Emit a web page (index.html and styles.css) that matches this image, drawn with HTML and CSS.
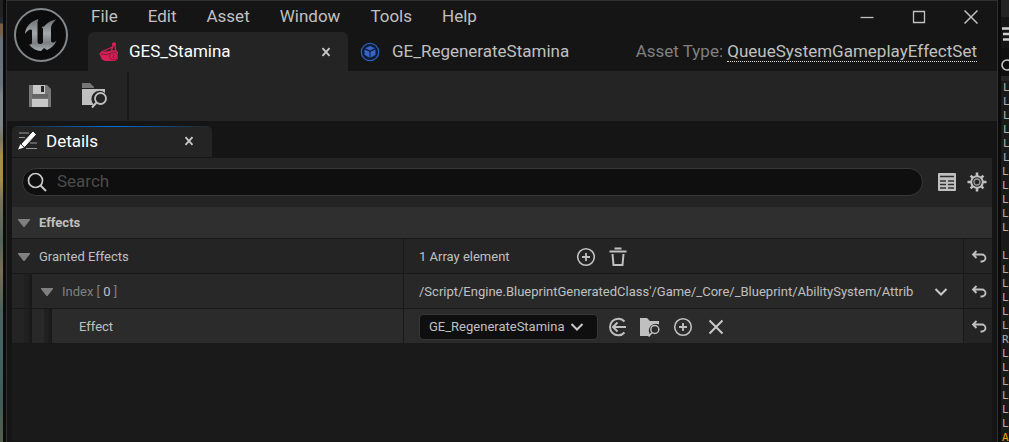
FILE: index.html
```html
<!DOCTYPE html>
<html lang="en">
<head>
<meta charset="utf-8">
<title>GES_Stamina</title>
<link rel="stylesheet" href="styles.css">
</head>
<body>
<svg class="defs" aria-hidden="true">
  <defs>
    <linearGradient id="metal" x1="0" y1="0" x2="0" y2="1">
      <stop offset="0" stop-color="#6d7072"/><stop offset=".45" stop-color="#a5a8aa"/><stop offset=".75" stop-color="#7b7e80"/><stop offset="1" stop-color="#a9b0b2"/>
    </linearGradient>
    <symbol id="reset" viewBox="0 0 16 16"><path d="M5.500 2 2 5.500 5.500 9M2.500 5.500H11a3.500 3.500 0 0 1 0 7H9.500" fill="none" stroke="#c0c0c0" stroke-width="1.800"/></symbol>
    <symbol id="chevron" viewBox="0 0 14 14"><path d="M1.500 4 7 9.500 12.500 4" fill="none" stroke="#c8c8c8" stroke-width="2"/></symbol>
    <symbol id="plus" viewBox="0 0 20 20"><circle cx="10" cy="10" r="8.300" fill="none" stroke="#c0c0c0" stroke-width="1.600"/><path d="M10 6v8M6 10h8" stroke="#c0c0c0" stroke-width="1.800"/></symbol>
    <symbol id="cross" viewBox="0 0 10 10"><path d="M1.500 1.200 8.500 8.800M8.500 1.200 1.500 8.800" stroke="#c8c8c8" stroke-width="1.900"/></symbol>
    <symbol id="triangle" viewBox="0 0 12 8"><path d="M0 0H12V1L6.500 8H5.500L0 1Z" fill="#808080"/></symbol>
  </defs>
</svg>
<div class="desktop">
  <div class="scene"></div>
  <main class="window">
    <header class="titlebar">
      <svg class="logo" viewBox="0 0 56 56" role="img" aria-label="Unreal Engine">
        <circle cx="28" cy="28" r="26" fill="#0c0c0c" stroke="#85888a" stroke-width="2"/>
        <path d="M25.500 12C18 14 12.500 19.500 12 27c2-3 4-4.500 5.500-4.500 1 0 1.500.5 1.500 1.500v11.500c0 1.500-1 2-3 2 3 4 7.500 6.300 12 6.500l3-3 3 2c4-1.500 7.500-4.500 9.500-9.500-1.500 1.500-2.500 2-3.500 2s-2-.6-2-2V21c0-3 2-5.500 5-8.500-5 1-9 3.500-12 7l-2.500.5c1 .6 1.500 1.500 1.500 2.500v13c-.8 1-2 1.500-3 1.500-1.500 0-2.500-.8-2.500-2.500V17c0-2 .5-3.500 1-5Z" fill="url(#metal)"/>
      </svg>
      <div class="title-rows">
        <div class="menu-row">
          <nav class="menus">
            <button>File</button><button>Edit</button><button>Asset</button><button>Window</button><button>Tools</button><button>Help</button>
          </nav>
          <div class="controls">
            <button aria-label="Minimize"><svg width="14" height="14"><path d="M.500 7.500h13" stroke="#c0c0c0" stroke-width="1.300"/></svg></button>
            <button aria-label="Maximize"><svg width="14" height="14"><path d="M1.500 1.500h11v11h-11z" fill="none" stroke="#c0c0c0" stroke-width="1.300"/></svg></button>
            <button aria-label="Close window"><svg width="14" height="14"><path d="M.500.500l13 13M13.500.500l-13 13" stroke="#c0c0c0" stroke-width="1.500"/></svg></button>
          </div>
        </div>
        <div class="tab-row">
          <div class="tab active">
            <svg width="20" height="20" viewBox="0 0 20 20"><path d="M1 10.500C4 10 8 9 11 9c2-1 6-1 8 1v7l-3 2H8c-4 0-6-2-6.500-5L.500 12Z" fill="#d91f58"/><path d="M2 10 13.500 5M14.500 2.500 12 9.500M15.500 2.500l1.500 7" stroke="#d91f58" stroke-width="1.300"/><circle cx="15" cy="2.300" r="2" fill="#d91f58"/><path d="M2 12q5 1.500 9-.5" stroke="#7c1939" fill="none"/><circle cx="14.500" cy="14" r="4" fill="none" stroke="#8b1a3e"/><path d="m13.500 12 2 1.500-2 1.500 2 1" stroke="#8b1a3e" fill="none"/></svg>
            <span class="tab-name">GES_Stamina</span>
            <button aria-label="Close GES_Stamina"><svg width="10" height="10"><use href="#cross"/></svg></button>
          </div>
          <div class="tab">
            <svg width="20" height="20" viewBox="0 0 20 20"><circle cx="10" cy="10" r="8.700" fill="#101b30" stroke="#2c5dbd" stroke-width="1.300"/><path d="m10 4 5 2.300-5 2.300-5-2.300ZM4.500 7.500l5 2.300v6l-5-3ZM15.500 7.500l-5 2.300v6l5-3Z" fill="#3566c8"/></svg>
            <span class="tab-name">GE_RegenerateStamina</span>
          </div>
          <div class="asset-type"><span>Asset Type:</span> <a href="#">QueueSystemGameplayEffectSet</a></div>
        </div>
      </div>
    </header>
    <div class="toolbar">
      <button aria-label="Save"><svg width="24" height="24" viewBox="0 0 24 24"><path d="M1 1h18l4 4v18H1Z" fill="#777"/><path d="M5 1h12v9H5ZM4 15h16v8H4Z" fill="#c8c8c8"/><path d="M4 10h16v4H4Z" fill="#666"/><path d="M13 2h3v6h-3Z" fill="#242424"/></svg></button>
      <button aria-label="Browse"><svg width="26" height="26" viewBox="0 0 26 26"><path d="M1 5V0h8l4 4v1Z" fill="#777"/><path d="M1 6h23v4a8 8 0 0 0-11 12H1Z" fill="#c0c0c0"/><circle cx="19.500" cy="15.500" r="5.500" fill="#242424" stroke="#c0c0c0" stroke-width="1.800"/><path d="m15.500 19.500-4.500 5" stroke="#c0c0c0" stroke-width="2"/></svg></button>
      <span class="divider"></span>
    </div>
    <section class="dock">
      <div class="panel-tab">
        <svg width="20" height="20" viewBox="0 0 20 20"><path d="M1 2h10M1 6.500h6M12 12h7M8 17.500h11" stroke="#999" stroke-width="1.200"/><path d="m15 1 2.500 2.500L6.500 15.500 4 13Z" stroke="#fff" fill="#fff"/><path d="m2.500 13 3.500 3.500L0 18.500Z" fill="#fff"/></svg>
        <span class="panel-name">Details</span>
        <button aria-label="Close Details"><svg width="10" height="10"><use href="#cross"/></svg></button>
      </div>
      <div class="panel">
        <div class="search-row">
          <label class="search">
            <svg width="20" height="20" viewBox="0 0 20 20"><circle cx="8.500" cy="8.500" r="7" fill="none" stroke="#c8c8c8" stroke-width="1.700"/><path d="m13.500 13.500 5.500 5.500" stroke="#c8c8c8" stroke-width="2"/></svg>
            <input type="text" placeholder="Search" aria-label="Search">
          </label>
          <button aria-label="Property matrix"><svg width="18" height="18" viewBox="0 0 18 18"><rect width="18" height="18" rx="1" fill="#c0c0c0"/><path d="M2 3.500h14M2 8h6M10 8h6M2 11.500h6M10 11.500h6M2 15h6M10 15h6" stroke="#303030" stroke-width="1.600"/></svg></button>
          <button aria-label="Settings"><svg width="20" height="20" viewBox="0 0 20 20"><path d="M10 .500v19M.500 10h19M3.600 3.600l12.800 12.800M16.400 3.600 3.600 16.400" stroke="#c0c0c0" stroke-width="2.600"/><circle cx="10" cy="10" r="5.800" fill="#242424" stroke="#c0c0c0" stroke-width="2"/><circle cx="10" cy="10" r="3" fill="none" stroke="#999" stroke-width="1.300"/></svg></button>
        </div>
        <div class="category"><svg width="12" height="8"><use href="#triangle"/></svg><h2>Effects</h2></div>
        <div class="row">
          <div class="name"><svg width="12" height="8"><use href="#triangle"/></svg><span>Granted Effects</span></div>
          <div class="value">
            <span class="count">1 Array element</span>
            <button aria-label="Add element"><svg width="20" height="20"><use href="#plus"/></svg></button>
            <button aria-label="Delete all elements"><svg width="20" height="20" viewBox="0 0 20 20"><path d="M1.500 4.500h17M6.500 1.500h7" stroke="#c0c0c0" stroke-width="2"/><path d="m4.500 7 1 11h9l1-11" fill="none" stroke="#c0c0c0" stroke-width="2"/></svg></button>
          </div>
          <div class="reset"><button aria-label="Reset Granted Effects"><svg width="16" height="16"><use href="#reset"/></svg></button></div>
        </div>
        <div class="row level1">
          <i class="indent"></i>
          <div class="name"><svg width="12" height="8"><use href="#triangle"/></svg><span class="dim">Index [ <b>0</b> ]</span></div>
          <div class="value">
            <span class="path">/Script/Engine.BlueprintGeneratedClass'/Game/_Core/_Blueprint/AbilitySystem/Attrib</span>
            <button class="expand" aria-label="Choose class"><svg width="14" height="14"><use href="#chevron"/></svg></button>
          </div>
          <div class="reset"><button aria-label="Reset Index 0"><svg width="16" height="16"><use href="#reset"/></svg></button></div>
        </div>
        <div class="row level2">
          <i class="indent"></i><i class="indent second"></i>
          <div class="name"><label for="effect">Effect</label></div>
          <div class="value">
            <span class="picker"><select id="effect"><option>GE_RegenerateStamina</option></select><svg width="14" height="14"><use href="#chevron"/></svg></span>
            <div class="actions">
            <button aria-label="Use selected"><svg width="20" height="20" viewBox="0 0 20 20"><path d="M17.500 4.500A8.300 8.300 0 1 0 17.500 15.500" fill="none" stroke="#c0c0c0" stroke-width="1.900"/><path d="M19 10H6M10.500 5.500 6 10l4.500 4.500" fill="none" stroke="#c0c0c0" stroke-width="2"/></svg></button>
            <button aria-label="Browse to asset"><svg width="20" height="20" viewBox="0 0 20 20"><path d="M0 1h7l3 3h9v3.500a7 7 0 0 0-9 10V19H0Z" fill="#c0c0c0"/><circle cx="14.800" cy="12.500" r="4" fill="none" stroke="#c0c0c0" stroke-width="1.500"/><path d="m12 15.500-3.500 4" stroke="#c0c0c0" stroke-width="1.700"/></svg></button>
            <button aria-label="Create new"><svg width="20" height="20"><use href="#plus"/></svg></button>
            <button aria-label="Clear"><svg width="20" height="20" viewBox="0 0 20 20"><path d="m3.500 3.500 13 13m0-13-13 13" stroke="#c8c8c8" stroke-width="2"/></svg></button>
            </div>
          </div>
          <div class="reset"><button aria-label="Reset Effect"><svg width="16" height="16"><use href="#reset"/></svg></button></div>
        </div>
      </div>
    </section>
  </main>
  <aside class="log">
    <div class="log-top"><svg width="14" height="14"><path d="M0 1.500h14M1 7h13M1 12.500h13" stroke="#d0d0d0" stroke-width="2.500"/></svg></div>
    <div class="log-search"><svg width="12" height="12" viewBox="0 0 12 12"><circle cx="6" cy="6" r="5" fill="none" stroke="#c8c8c8" stroke-width="1.600"/></svg></div>
    <pre class="lines"><span class="inset">L
L
L
L
L
L
</span>L
L
L
L
L

L
L
L
L
L
L
R
L
L
L
L
L
L
<span class="warn">A</span></pre>
  </aside>
</div>
</body>
</html>
```
FILE: styles.css
```css
* { box-sizing: border-box; }
body { margin: 0; background: #0b0b0b; color: #c0c0c0; font: 13px/16px Roboto, "Noto Sans", sans-serif; }
button { display: flex; align-items: center; justify-content: center; padding: 0; border: 0; background: none; color: inherit; font: inherit; }
svg { display: block; flex: none; }
.defs { position: absolute; width: 0; height: 0; }
.desktop { display: grid; grid-template-columns: 3px minmax(0, 1fr) 8px; column-gap: 3px; height: 100vh; overflow: hidden; }
.scene { background: linear-gradient(#222 0 17px, #252a2e 17px 23px, #765f42 24px 32px, #68717c 40px 85px, #7d8587 95px 125px, #79775f 140px, #a78c4d 155px 180px, #777358 200px, #52635e 240px, #796d55 270px, #4d625d 310px, #456365 350px, #405b56 400px, #555e4c); }
.window { display: flex; flex-direction: column; min-width: 0; border: solid #303030; border-width: 1px 1px 0; background: #151515; }

.titlebar { display: flex; height: 70px; }
.logo { width: 56px; height: 56px; margin: 6px 19px 0 6px; }
.title-rows { flex: 1; min-width: 0; display: flex; flex-direction: column; }
.menu-row { display: flex; justify-content: space-between; height: 31px; font-size: 17px; line-height: 20px; }
.menus { display: flex; gap: 30px; padding: 0 0 2px 3px; }
.controls { display: flex; gap: 38px; padding-right: 19px; }
.tab-row { flex: 1; display: flex; font-size: 17px; line-height: 20px; }
.tab { display: flex; align-items: center; gap: 12px; padding: 0 13px 0 12px; }
.tab.active { width: 260px; padding: 0 17px 0 11px; gap: 10px; border-radius: 6px 6px 0 0; background: #242424; color: #fff; }
.tab-name, .panel-name { flex: 1; padding-bottom: 2px; }
.asset-type { align-self: center; margin-left: auto; padding: 0 20px 2px 0; color: #808080; white-space: nowrap; }
.asset-type a { color: #c0c0c0; text-decoration: none; border-bottom: 1px dotted #e0e0e0; }

.toolbar { display: flex; align-items: center; height: 50px; padding-left: 21px; gap: 29px; background: #242424; }
.divider { width: 2px; height: 48px; margin-left: -9px; background: #191919; }

.dock { flex: 1; display: flex; flex-direction: column; padding: 5px 5px 1px; }
.panel-tab { position: relative; display: flex; align-items: center; gap: 8px; width: 200px; height: 31px; margin-bottom: 1px; padding: 0 18px 2px 6px; border-radius: 5px 5px 0 0; background: #242424; color: #fff; font-size: 17px; line-height: 20px; overflow: hidden; }
.panel-name { padding-bottom: 0; }
.panel-tab::before { content: ""; position: absolute; inset: 0 0 auto; height: 1px; background: linear-gradient(90deg, transparent, #0070e0 50%, transparent); }
.panel { flex: 1; background: #1a1a1a; }
.search-row { display: flex; align-items: center; gap: 11px; height: 49px; padding: 0 5px 1px 10px; background: #242424; }
.search { flex: 1; display: flex; align-items: center; gap: 10px; height: 28px; margin-right: 4px; padding: 0 4px; border: 1px solid #383838; border-radius: 14px; background: #0f0f0f; }
.search input { flex: 1; min-width: 0; padding: 0 0 2px; border: 0; outline: 0; background: none; color: #c0c0c0; font: 17px/20px Roboto, sans-serif; }
.search input::placeholder { color: #4c4c4c; opacity: 1; }
.category { display: flex; align-items: center; gap: 9px; height: 32px; padding-left: 6px; border-bottom: 1px solid #191919; background: #2f2f2f; }
.category h2 { margin: 0; font-size: 13px; line-height: 16px; }

.row { display: grid; grid-template-columns: 392px minmax(0, 1fr) 29px; height: 35px; border-bottom: 1px solid #191919; background: #242424; }
.row .name, .row .value, .row .reset { padding-top: 1px; }
.level1 { grid-template-columns: 20px 372px minmax(0, 1fr) 29px; }
.level2 { grid-template-columns: 20px 20px 352px minmax(0, 1fr) 29px; }
.indent { background: linear-gradient(90deg, transparent 12px, #1c1c1c 13px, #222 14px, #171717); }
.name { display: flex; align-items: center; gap: 9px; min-width: 0; padding-left: 6px; border-right: 1px solid #191919; }
.level1 .name, .level1 .value, .second { background-color: #282828; }
.level1 .name { padding-left: 9px; }
.level2 .name, .level2 .value { background: #2b2b2b; }
.level2 .name { padding-left: 27px; }
.dim { color: #808080; }
.dim b { color: #c0c0c0; font-weight: 400; }
.value { display: flex; align-items: center; min-width: 0; padding-left: 15px; }
.count { width: 157px; }
.count + button { margin-right: 12px; }
.path { flex: 1; overflow: hidden; white-space: nowrap; }
.expand { padding: 0 15px 0 18px; }
.picker { position: relative; width: 179px; height: 26px; }
.picker select { width: 100%; height: 100%; padding: 0 28px 0 9px; appearance: none; border: 1px solid #383838; border-radius: 4px; background: #0f0f0f; color: #c0c0c0; font: 13px/16px Roboto, sans-serif; }
.picker svg { position: absolute; right: 14px; top: 6px; pointer-events: none; }
.actions { display: flex; gap: 13px; padding-left: 9px; }
.reset { display: flex; align-items: center; justify-content: center; padding-left: 1px; border-left: 1px solid #191919; background: #242424; }

.log { min-width: 0; overflow: hidden; background: #191919; }
.log-top { height: 48px; padding: 27px 0 0 1px; background: linear-gradient(#242424 17px, #151515 17px); }
.log-search { height: 33px; padding: 11px 0 0; border-bottom: 5px solid #242424; background: #0f0f0f; }
.lines { margin: 0; padding-left: 1px; color: #b0b0b0; font: 11px/14px "DejaVu Sans Mono", monospace; }
.inset { display: block; padding-left: 1px; }
.warn { color: #f0a000; }
```
